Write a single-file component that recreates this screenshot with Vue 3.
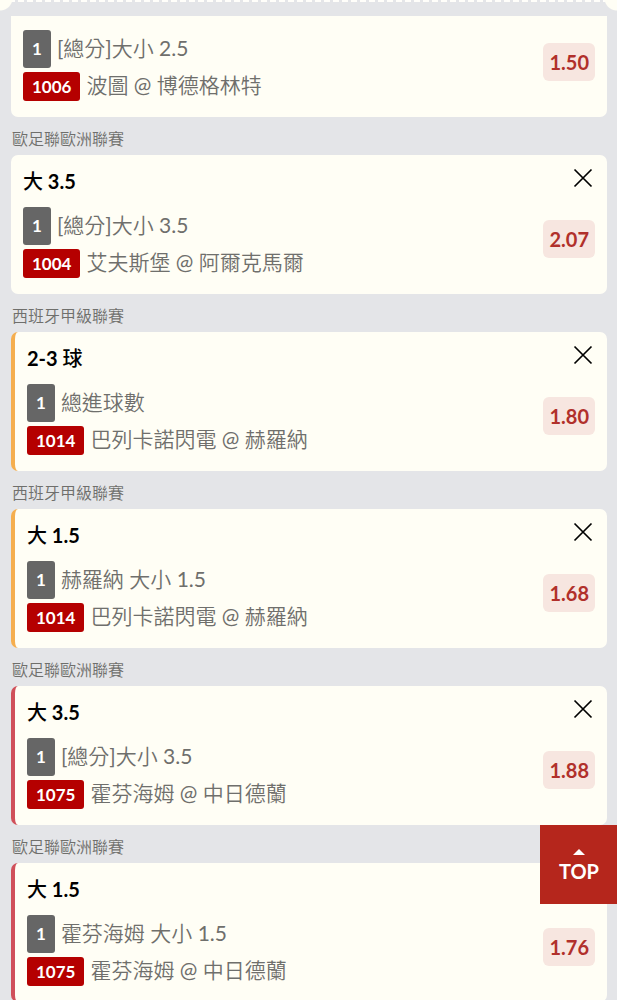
<script setup>
import { ref } from 'vue'

const europa = '歐足聯歐洲聯賽'
const laliga = '西班牙甲級聯賽'

const bets = ref([
  { id: 1, pick: '', market: '[總分]大小 2.5', code: '1006', match: '波圖 @ 博德格林特', odds: '1.50', tone: '' },
  { id: 2, league: europa, pick: '大 3.5', market: '[總分]大小 3.5', code: '1004', match: '艾夫斯堡 @ 阿爾克馬爾', odds: '2.07', tone: '' },
  { id: 3, league: laliga, pick: '2-3 球', market: '總進球數', code: '1014', match: '巴列卡諾閃電 @ 赫羅納', odds: '1.80', tone: 'amber' },
  { id: 4, league: laliga, pick: '大 1.5', market: '赫羅納 大小 1.5', code: '1014', match: '巴列卡諾閃電 @ 赫羅納', odds: '1.68', tone: 'amber' },
  { id: 5, league: europa, pick: '大 3.5', market: '[總分]大小 3.5', code: '1075', match: '霍芬海姆 @ 中日德蘭', odds: '1.88', tone: 'rose' },
  { id: 6, league: europa, pick: '大 1.5', market: '霍芬海姆 大小 1.5', code: '1075', match: '霍芬海姆 @ 中日德蘭', odds: '1.76', tone: 'rose' }
])

const remove = (id) => {
  bets.value = bets.value.filter((bet) => bet.id !== id)
}
const toTop = () => window.scrollTo({ top: 0 })
</script>

<template>
  <main class="slip">
    <div class="tear"></div>
    <section v-for="bet in bets" :key="bet.id" class="bet">
      <h2 v-if="bet.league" class="league">{{ bet.league }}</h2>
      <article class="card" :class="[bet.tone, { partial: !bet.pick }]">
        <header v-if="bet.pick" class="head">
          <h3 class="pick">{{ bet.pick }}</h3>
          <button class="close" type="button" aria-label="移除" @click="remove(bet.id)">
            <svg viewBox="0 0 20 20" width="20" height="20">
              <path d="M1.5 1.5L18.5 18.5M18.5 1.5L1.5 18.5" fill="none" stroke="#000" stroke-width="1.7" />
            </svg>
          </button>
        </header>
        <div class="body">
          <div class="lines">
            <p class="line">
              <span class="badge count">1</span>
              <span class="text">{{ bet.market }}</span>
            </p>
            <p class="line">
              <span class="badge code">{{ bet.code }}</span>
              <span class="text">{{ bet.match }}</span>
            </p>
          </div>
          <span class="odds">{{ bet.odds }}</span>
        </div>
      </article>
    </section>
    <button class="top" type="button" @click="toTop">
      <svg viewBox="0 0 12 6" width="12" height="6"><path d="M0 6L6 0L12 6Z" fill="#fff" /></svg>
      TOP
    </button>
  </main>
</template>

<style>
html {
  background: #e4e5e8;
  scrollbar-width: none;
}
body {
  margin: 0;
}
</style>

<style scoped>
.slip {
  position: relative;
  font-family: Lato, "Noto Sans CJK TC DemiLight", "Noto Sans CJK TC Light", "Noto Sans CJK TC", sans-serif;
  color: #6f6f6c;
  background: #e4e5e8;
}
.tear {
  height: 16px;
  background:
    radial-gradient(circle at 0 -2px, #fffef5 12px, transparent 13px) left top / 14px 14px no-repeat,
    radial-gradient(circle at 100% -2px, #fffef5 12px, transparent 13px) right top / 14px 14px no-repeat,
    repeating-linear-gradient(90deg, #fffefa 0 6px, #e4e5e8 6px 9px) left top / 100% 2px no-repeat;
}
.bet {
  padding: 0 10px 0 11px;
}
.league {
  margin: 0;
  padding: 10px 0 4px 1px;
  font-size: 16px;
  line-height: 24px;
  font-weight: 400;
}
.card {
  padding: 12px 12px 16px;
  border-radius: 7px;
  background: #fffef5;
}
.card.partial {
  padding-top: 14px;
  border-radius: 0 0 7px 7px;
}
.amber {
  border-left: 4px solid #f5ae4e;
}
.rose {
  border-left: 4px solid #d0505a;
}
.head {
  display: flex;
  justify-content: space-between;
  align-items: flex-start;
  margin-bottom: 12px;
}
.pick {
  margin: 0;
  font-family: Lato, "Noto Sans CJK TC Medium", "Noto Sans CJK TC", sans-serif;
  font-size: 20px;
  line-height: 28px;
  font-weight: 700;
  color: #000;
}
.close {
  display: block;
  padding: 1px 2px;
  border: 0;
  background: none;
  cursor: pointer;
}
.close svg {
  display: block;
}
.body {
  display: flex;
  justify-content: space-between;
  align-items: flex-start;
}
.lines {
  display: flex;
  flex-direction: column;
  gap: 4px;
}
.line {
  display: flex;
  align-items: center;
  gap: 6px;
  margin: 0;
  font-size: 21px;
  line-height: 26px;
}
.text {
  padding-bottom: 3px;
}
.badge {
  padding: 0 9px;
  border-radius: 3px;
  font-size: 17px;
  font-weight: 700;
  color: #fff;
}
.count {
  line-height: 38px;
  background: #666;
}
.code {
  line-height: 29px;
  background: #b50000;
}
.odds {
  margin-top: 13px;
  padding: 0 6px;
  border-radius: 6px;
  font-size: 20px;
  line-height: 38px;
  font-weight: 700;
  color: #b1302b;
  background: #f7e6e0;
}
.top {
  position: fixed;
  right: 0;
  bottom: 96px;
  display: flex;
  flex-direction: column;
  align-items: center;
  gap: 4px;
  padding: 24px 18px 21px 19px;
  border: 0;
  font-family: inherit;
  font-size: 20px;
  line-height: 24px;
  font-weight: 700;
  color: #fff;
  background: #b5261c;
  cursor: pointer;
}
</style>
